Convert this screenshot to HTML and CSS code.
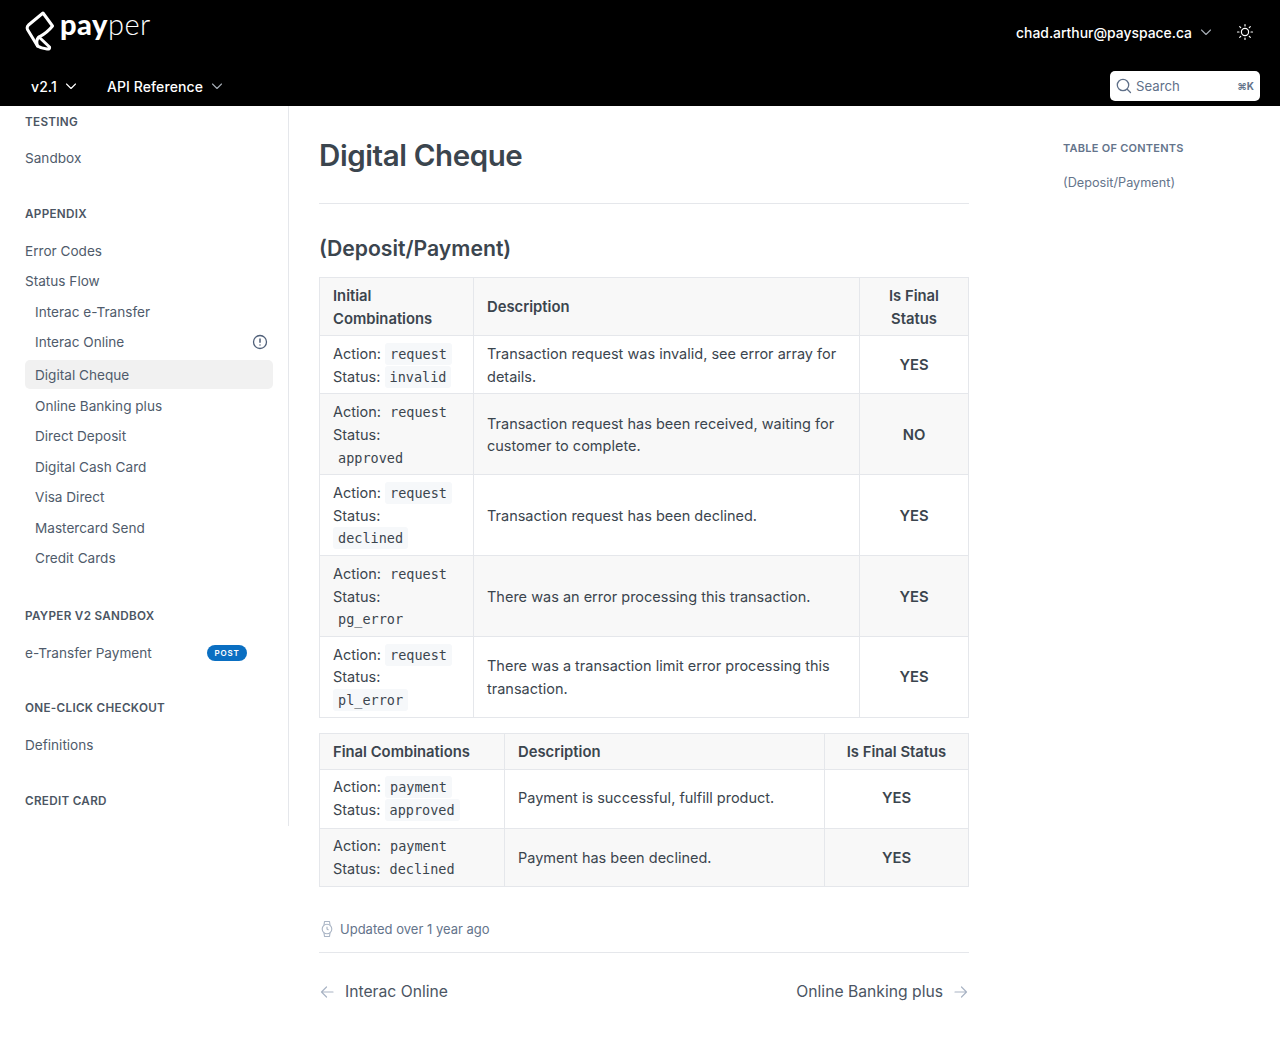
FILE: index.html
```html
<!DOCTYPE html>
<html lang="en">
<head>
  <meta charset="UTF-8">
  <meta name="viewport" content="width=device-width, initial-scale=1.0">
  <title>Digital Cheque</title>
  <link rel="stylesheet" href="styles.css">
</head>
<body>

  <header class="topbar">
    <div class="topbar-row">
      <a class="logo" href="#">
        <svg class="logo-mark" width="30" height="42" viewBox="0 0 30 42" fill="none" stroke="#fff" stroke-width="3" stroke-linejoin="round" stroke-linecap="round">
          <path d="M18 3 L27.500 16 Q22 23 14 27 L24.500 37 Q25 39.500 22 39 Q16 38.500 12.500 36 L2.500 19.500 Q1.500 17 3.500 15 Z"/>
          <path d="M14 27 Q10.500 30 12.500 36"/>
        </svg>
        <span class="logo-text"><b>pay</b>per</span>
      </a>
      <div class="user-tools">
        <span class="user-email">chad.arthur@payspace.ca</span>
        <svg class="chev chev-header" width="12" height="12" viewBox="0 0 12 12"><path d="M1.500 4 L6 8.500 L10.500 4"/></svg>
        <svg class="sun" width="18" height="18" viewBox="0 0 18 18" fill="none" stroke="#fff" stroke-width="1.200" stroke-linecap="round">
          <circle cx="9" cy="9" r="3.600"/>
          <path d="M9 1.500v1.500M9 15v1.500M1.500 9H3M15 9h1.500M3.700 3.700l1 1M13.300 13.300l1 1M3.700 14.300l1-1M13.300 4.700l1-1"/>
        </svg>
      </div>
    </div>
    <div class="topbar-row topbar-bottom">
      <nav class="top-nav">
        <span class="top-link">v2.1 <svg class="chev chev-bright" width="12" height="12" viewBox="0 0 12 12"><path d="M1.500 4 L6 8.500 L10.500 4"/></svg></span>
        <span class="top-link">API Reference <svg class="chev chev-header" width="12" height="12" viewBox="0 0 12 12"><path d="M1.500 4 L6 8.500 L10.500 4"/></svg></span>
      </nav>
      <div class="search">
        <svg width="16" height="16" viewBox="0 0 16 16" fill="none" stroke="#5f7089" stroke-width="1.300" stroke-linecap="round"><circle cx="7" cy="7" r="5.700"/><path d="M11.200 11.200 L14.500 14.500"/></svg>
        <span class="search-label">Search</span>
        <span class="search-key">⌘K</span>
      </div>
    </div>
  </header>

  <div class="page">
    <aside class="sidebar">
      <h4 class="side-title side-title-first">TESTING</h4>
      <a class="side-item">Sandbox</a>

      <h4 class="side-title">APPENDIX</h4>
      <a class="side-item">Error Codes
        <svg class="chev chev-side" width="12" height="12" viewBox="0 0 12 12"><path d="M4 1.500 L8.500 6 L4 10.500"/></svg>
      </a>
      <a class="side-item">Status Flow
        <svg class="chev chev-side" width="12" height="12" viewBox="0 0 12 12"><path d="M1.500 4 L6 8.500 L10.500 4"/></svg>
      </a>
      <a class="side-item sub">Interac e-Transfer</a>
      <a class="side-item sub">Interac Online
        <svg class="alert-icon" width="16" height="16" viewBox="0 0 16 16" fill="none" stroke="#4f5f78" stroke-width="1.300"><circle cx="8" cy="8" r="6.500"/><path d="M8 4.500v4.200M8 10.600v1" stroke-width="1.500"/></svg>
      </a>
      <a class="side-item sub active">Digital Cheque</a>
      <a class="side-item sub">Online Banking plus</a>
      <a class="side-item sub">Direct Deposit</a>
      <a class="side-item sub">Digital Cash Card</a>
      <a class="side-item sub">Visa Direct</a>
      <a class="side-item sub">Mastercard Send</a>
      <a class="side-item sub sub-last">Credit Cards</a>

      <h4 class="side-title">PAYPER V2 SANDBOX</h4>
      <a class="side-item">e-Transfer Payment <span class="badge-post">POST</span></a>

      <h4 class="side-title">ONE-CLICK CHECKOUT</h4>
      <a class="side-item">Definitions</a>

      <h4 class="side-title">CREDIT CARD</h4>
    </aside>

    <main class="content">
      <h1 class="page-title">Digital Cheque</h1>
      <h2 class="section-title">(Deposit/Payment)</h2>

      <table class="status-table table-initial">
        <thead>
          <tr><th class="left">Initial Combinations</th><th class="left">Description</th><th>Is Final Status</th></tr>
        </thead>
        <tbody>
          <tr>
            <td>Action: <code class="boxed">request</code><br>Status: <code class="boxed">invalid</code></td>
            <td>Transaction request was invalid, see error array for details.</td>
            <td class="final">YES</td>
          </tr>
          <tr class="alt">
            <td>Action: <code>request</code><br>Status:<br><code>approved</code></td>
            <td>Transaction request has been received, waiting for customer to complete.</td>
            <td class="final">NO</td>
          </tr>
          <tr>
            <td>Action: <code class="boxed">request</code><br>Status:<br><code class="boxed">declined</code></td>
            <td>Transaction request has been declined.</td>
            <td class="final">YES</td>
          </tr>
          <tr class="alt">
            <td>Action: <code>request</code><br>Status:<br><code>pg_error</code></td>
            <td>There was an error processing this transaction.</td>
            <td class="final">YES</td>
          </tr>
          <tr>
            <td>Action: <code class="boxed">request</code><br>Status:<br><code class="boxed">pl_error</code></td>
            <td>There was a transaction limit error processing this transaction.</td>
            <td class="final">YES</td>
          </tr>
        </tbody>
      </table>

      <table class="status-table table-final">
        <thead>
          <tr><th class="left">Final Combinations</th><th class="left">Description</th><th>Is Final Status</th></tr>
        </thead>
        <tbody>
          <tr class="first">
            <td>Action: <code class="boxed">payment</code><br>Status: <code class="boxed">approved</code></td>
            <td>Payment is successful, fulfill product.</td>
            <td class="final">YES</td>
          </tr>
          <tr class="alt">
            <td>Action: <code>payment</code><br>Status: <code>declined</code></td>
            <td>Payment has been declined.</td>
            <td class="final">YES</td>
          </tr>
        </tbody>
      </table>

      <div class="updated">
        <svg width="16" height="18" viewBox="0 0 16 18" fill="none" stroke="#a9b4c4" stroke-width="1.100" stroke-linejoin="round">
          <circle cx="8" cy="9" r="4.800"/>
          <path d="M5 5 L5.500 1.500 H10.500 L11 5 M5 13 L5.500 16.500 H10.500 L11 13 M8 6.800 V9 L9.500 10"/>
        </svg>
        <span>Updated over 1 year ago</span>
      </div>

      <div class="pager">
        <a class="pager-link">
          <svg width="14" height="14" viewBox="0 0 14 14"><path d="M13 7 H1.500 M6.500 2 L1.500 7 L6.500 12"/></svg>
          Interac Online
        </a>
        <a class="pager-link">
          Online Banking plus
          <svg width="14" height="14" viewBox="0 0 14 14"><path d="M1 7 H12.500 M7.500 2 L12.500 7 L7.500 12"/></svg>
        </a>
      </div>
    </main>

    <aside class="toc">
      <h4 class="toc-title">TABLE OF CONTENTS</h4>
      <a class="toc-link">(Deposit/Payment)</a>
    </aside>
  </div>

</body>
</html>
```
FILE: styles.css
```css
* {
  box-sizing: border-box;
}

body {
  margin: 0;
  font-family: 'Inter', sans-serif;
  color: #3b454e;
  background: #fff;
}

/* header */
.topbar {
  background: #000;
  height: 106px;
  padding: 0 20px 5px 25px;
  display: flex;
  flex-direction: column;
  justify-content: space-between;
}

.topbar-row {
  display: flex;
  justify-content: space-between;
  align-items: center;
}

.logo {
  display: flex;
  align-items: flex-start;
  gap: 5px;
  margin-top: 10px;
  color: #fff;
  text-decoration: none;
}

.logo-text {
  font-family: 'Lato', sans-serif;
  font-size: 29px;
  font-weight: 300;
  line-height: 30px;
  letter-spacing: 0.5px;
  margin-top: -1px;
}

.logo-text b {
  font-weight: 900;
}

.user-tools {
  display: flex;
  align-items: center;
  margin-top: 12px;
  margin-right: 6px;
}

.user-email {
  color: #fff;
  font-size: 13.900px;
  font-weight: 500;
  margin-top: 2px;
}

.chev {
  fill: none;
  stroke-width: 1.100;
  stroke-linecap: round;
  stroke-linejoin: round;
}

.chev-header {
  stroke: #a5acb5;
}

.chev-bright {
  stroke: #fff;
}

.user-tools .chev {
  margin-left: 8px;
}

.sun {
  margin-left: 24px;
}

.top-nav {
  display: flex;
  gap: 30px;
  padding-left: 6px;
}

.top-link {
  display: flex;
  align-items: center;
  gap: 8px;
  color: #fff;
  font-size: 14px;
  font-weight: 500;
  letter-spacing: 0.1px;
}

.search {
  width: 150px;
  height: 30px;
  background: #fff;
  border-radius: 5px;
  display: flex;
  align-items: center;
  padding: 0 6px;
  color: #5f7089;
}

.search-label {
  font-size: 13.200px;
  line-height: 15px;
  margin-left: 4px;
  flex: 1;
}

.search-key {
  font-size: 10px;
  font-weight: 700;
  color: #64748b;
}

/* page columns */
.page {
  display: flex;
  align-items: flex-start;
}

.sidebar {
  width: 289px;
  height: 720px;
  flex: none;
  border-right: 1px solid #e5e7eb;
  padding: 0 15px 0 25px;
  font-size: 13.600px;
}

.side-title {
  margin: 32px 0 14px;
  font-size: 11.700px;
  font-weight: 600;
  line-height: 16px;
  letter-spacing: 0.3px;
  color: #4b5563;
}

.side-title-first {
  margin: 8px 0 13px;
}

.side-item {
  display: flex;
  align-items: center;
  justify-content: space-between;
  height: 30.500px;
  width: 248px;
  padding-right: 7px;
  color: #4f5b6b;
}

.side-item.sub {
  padding-left: 10px;
  padding-right: 5px;
}

.side-item.sub-last {
  margin-bottom: 34px;
}

.side-item.active {
  height: 29px;
  margin: 2.500px 0 1.600px;
  background: #f1f1f1;
  border-radius: 5px;
}

.badge-post {
  background: #0a6fc2;
  color: #fff;
  font-size: 8px;
  font-weight: 600;
  letter-spacing: 0.8px;
  line-height: 16px;
  width: 40px;
  text-align: center;
  border-radius: 9px;
  margin-right: 19px;
}

.content {
  width: 650px;
  margin-left: 30px;
  flex: none;
}

.page-title {
  margin: 0;
  padding: 31px 0 30px;
  font-size: 29.500px;
  font-weight: 600;
  line-height: 36px;
  letter-spacing: -0.4px;
  border-bottom: 1px solid #e5e7eb;
}

.section-title {
  margin: 30px 0 15px;
  font-size: 21.200px;
  font-weight: 600;
  line-height: 28px;
}

/* tables */
.status-table {
  width: 650px;
  border-collapse: collapse;
  table-layout: fixed;
  font-size: 14.500px;
  line-height: 22.600px;
  margin-bottom: 15px;
}

.status-table th,
.status-table td {
  border: 1px solid #e5e7eb;
  padding: 7px 13px 5px;
  text-align: left;
  font-weight: 400;
}

.status-table th {
  background: #f8f8f8;
  font-size: 14.800px;
  font-weight: 600;
  text-align: center;
}

.status-table th.left {
  text-align: left;
}

.status-table .final {
  font-size: 14.800px;
  text-align: center;
  font-weight: 600;
}

.status-table .alt td {
  background: #f8f8f8;
}

.table-initial th:nth-child(1) {
  width: 154px;
}

.table-initial th:nth-child(2) {
  width: 386px;
}

.table-final th:nth-child(1) {
  width: 185px;
}

.table-final th:nth-child(2) {
  width: 320px;
}

.table-final th {
  padding-bottom: 6px;
}

.table-final .first td {
  padding: 6px 13px 7px;
}

.table-final .alt td {
  padding: 6px 13px;
}

code {
  font-family: 'DejaVu Sans Mono', monospace;
  font-size: 13.500px;
  line-height: 1;
  padding: 3px 5px;
  border-radius: 3px;
}

code.boxed {
  background: #f6f8fa;
}

/* footer of the article */
.updated {
  display: flex;
  align-items: center;
  gap: 5px;
  margin-top: 33px;
  padding-bottom: 14px;
  border-bottom: 1px solid #e5e7eb;
  font-size: 13px;
  color: #64748b;
}

.pager {
  display: flex;
  justify-content: space-between;
  padding: 29px 1px 0;
}

.pager-link {
  display: flex;
  align-items: center;
  gap: 11px;
  font-size: 15.700px;
  color: #4b5563;
}

.pager-link svg {
  fill: none;
  stroke: #a9b4c4;
  stroke-width: 1.200;
  stroke-linecap: round;
  stroke-linejoin: round;
}

/* right column */
.toc {
  margin-left: 94px;
  padding-top: 35px;
}

.toc-title {
  margin: 0 0 16px;
  font-size: 11px;
  font-weight: 600;
  line-height: 14px;
  letter-spacing: 0.25px;
  color: #64748b;
}

.toc-link {
  font-size: 12.700px;
  color: #64748b;
}
```
